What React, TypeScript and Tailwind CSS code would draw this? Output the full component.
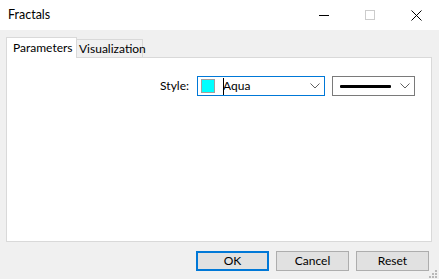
import React from "react";

const FONT = { fontFamily: 'Lato, "Liberation Sans", sans-serif' };

function Chevron() {
  return (
    <svg width="10" height="6" viewBox="0 0 10 6" className="shrink-0">
      <path d="M0.5 0.5 L5 5 L9.5 0.5" fill="none" stroke="#606060" strokeWidth="1" />
    </svg>
  );
}

function CaptionButtons() {
  return (
    <div className="flex h-full">
      <div className="w-[46px] h-full flex items-center justify-center">
        <svg width="10" height="10" viewBox="0 0 10 10">
          <path d="M0 5.5 H10" stroke="#000" strokeWidth="1" />
        </svg>
      </div>
      <div className="w-[46px] h-full flex items-center justify-center">
        <svg width="10" height="10" viewBox="0 0 10 10">
          <rect x="0.5" y="0.5" width="9" height="9" fill="none" stroke="#cccccc" strokeWidth="1" />
        </svg>
      </div>
      <div className="w-[46px] h-full flex items-center justify-center">
        <svg width="11" height="11" viewBox="0 0 11 11">
          <path d="M0.5 0.5 L10.5 10.5 M10.5 0.5 L0.5 10.5" stroke="#000" strokeWidth="1" />
        </svg>
      </div>
    </div>
  );
}

export default function App() {
  return (
    <div className="w-[439px] h-[279px] bg-[#f0f0f0] flex flex-col overflow-hidden text-[12px] text-black" style={FONT}>
      {/* title bar */}
      <div className="h-[30px] bg-white flex items-center justify-between shrink-0">
        <span className="pl-[8px] text-[12.5px]">Fractals</span>
        <CaptionButtons />
      </div>

      <div className="flex-1 flex flex-col pl-[6px] pr-[7px] pt-[7px]">
        {/* tabs */}
        <div className="flex items-end h-[20px] relative z-10 whitespace-nowrap">
          <div className="w-[71px] h-[21px] -mb-[1px] bg-white border border-b-0 border-[#d9d9d9] flex items-center pl-[6px] leading-none">
            Parameters
          </div>
          <div className="w-[66px] h-[18px] bg-[#f0f0f0] border border-b-0 border-l-0 border-[#d9d9d9] flex items-center pt-[1px] pl-[2px] leading-none">
            Visualization
          </div>
        </div>

        {/* panel */}
        <div className="h-[185px] bg-white border border-[#d9d9d9] flex justify-end pr-[16px] pt-[18px]">
          <div className="flex items-start h-[20px]">
            <span className="h-[20px] flex items-center mr-[8px]">Style:</span>
            <div className="w-[128px] h-[20px] border border-[#0078d7] flex items-center pl-[3px] pr-[4px] relative">
              <div className="w-[14px] h-[14px] bg-[#00ffff] border border-[#a0a0a0] shrink-0" />
              <span className="ml-[8px] flex-1 leading-none">Aqua</span>
              <div className="absolute left-[25px] top-[1px] w-px h-[17px] bg-black" />
              <Chevron />
            </div>
            <div className="w-[83px] h-[20px] ml-[7px] border border-[#7a7a7a] flex items-center pl-[7px] pr-[4px]">
              <div className="w-[51px] h-[3px] bg-black rounded-[1px]" />
              <div className="flex-1" />
              <Chevron />
            </div>
          </div>
        </div>

        {/* buttons */}
        <div className="flex justify-end gap-[7px] pt-[9px] pr-[3px] relative">
          <button className="w-[73px] h-[20px] bg-[#e1e1e1] border-2 border-[#0078d7] flex items-center justify-center leading-none">
            OK
          </button>
          <button className="w-[73px] h-[20px] bg-[#e1e1e1] border border-[#adadad] flex items-center justify-center leading-none">
            Cancel
          </button>
          <button className="w-[73px] h-[20px] bg-[#e1e1e1] border border-[#adadad] flex items-center justify-center leading-none">
            Reset
          </button>
          <svg width="9" height="9" viewBox="0 0 9 9" className="absolute right-[-6px] bottom-[-8px]">
            <g fill="#b8b8b8">
              <rect x="6" y="0" width="2" height="2" />
              <rect x="3" y="3" width="2" height="2" />
              <rect x="6" y="3" width="2" height="2" />
              <rect x="0" y="6" width="2" height="2" />
              <rect x="3" y="6" width="2" height="2" />
              <rect x="6" y="6" width="2" height="2" />
            </g>
          </svg>
        </div>
      </div>
    </div>
  );
}
